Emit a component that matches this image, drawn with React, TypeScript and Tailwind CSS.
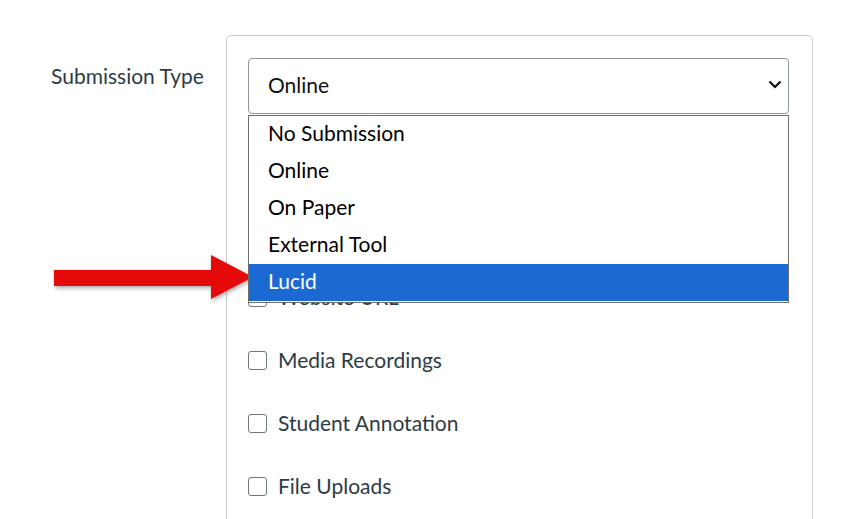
import { useState } from "react";

const options = ["No Submission", "Online", "On Paper", "External Tool", "Lucid"];
const entryOptions = [
  "Text Entry",
  "Website URL",
  "Media Recordings",
  "Student Annotation",
  "File Uploads",
];

const Chevron = () => (
  <svg width="14" height="9" viewBox="0 0 14 9" className="shrink-0">
    <path d="M1.5 1.5 L7 7 L12.5 1.5" fill="none" stroke="#111" strokeWidth="2.2" />
  </svg>
);

const Arrow = () => (
  <svg
    width="220"
    height="60"
    viewBox="0 0 220 60"
    className="absolute left-[46px] top-[249px] drop-shadow-[1px_2px_2px_rgba(0,0,0,0.35)]"
  >
    <rect x="8" y="21" width="158" height="16" fill="#e40a0a" />
    <polygon points="165,6 207,28 165,50" fill="#e40a0a" />
  </svg>
);

const App = () => {
  const [selected] = useState("Lucid");

  return (
    <div className="relative w-[841px] h-[519px] overflow-hidden bg-white font-['Lato','Noto_Sans',sans-serif]">
      <div className="flex pt-[35px]">
        <div className="w-[226px] shrink-0 pl-[51px] pt-[27px] text-[21px] leading-[28px] text-[#2d3b45]">
          Submission Type
        </div>
        <div className="w-[587px] h-[600px] shrink-0 rounded-[5px] border border-[#c7cdd1] pl-[21px] pr-[23px] pt-[22px]">
          <div className="relative">
            <div className="flex h-[56px] items-center justify-between rounded-[4px] border border-[#8b969e] pb-[3px] pl-[19px] pr-[6px] text-[21px] text-[#111]">
              <span>Online</span>
              <Chevron />
            </div>
            <ul className="absolute left-0 right-0 top-[57px] z-10 border border-[#6f6f6f] bg-white text-[21px] text-black">
              {options.map((o) => (
                <li
                  key={o}
                  className={
                    o === selected
                      ? "flex h-[37px] items-center bg-[#1b6ad4] pb-[3px] pl-[19px] text-white"
                      : "flex h-[37px] items-center pb-[3px] pl-[19px]"
                  }
                >
                  {o}
                </li>
              ))}
              <li className="h-px" />
            </ul>
          </div>
          <div className="mt-[28px] text-[21px] text-[#2d3b45]">Online Entry Options</div>
          <div className="mt-[29px] flex flex-col">
            {entryOptions.map((e) => (
              <label key={e} className="flex h-[63px] items-center gap-[11px] text-[21px] text-[#2d3b45]">
                <span className="h-[19px] w-[19px] rounded-[3px] border-[1.5px] border-[#6b7780] bg-white" />
                <span className="pb-[1px]">{e}</span>
              </label>
            ))}
          </div>
        </div>
      </div>
      <Arrow />
    </div>
  );
};

export default App;
